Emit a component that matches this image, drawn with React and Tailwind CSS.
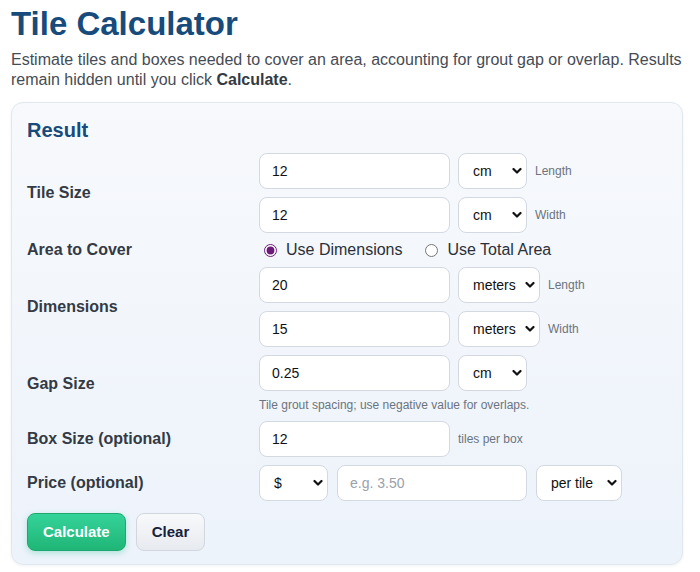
import React, { useState } from 'react';

const font = { fontFamily: '"Liberation Sans", Arial, sans-serif' };

const Chevron = () => (
  <svg
    className="pointer-events-none absolute right-[5px] top-1/2 -translate-y-1/2"
    width="10"
    height="7"
    viewBox="0 0 10 7"
    fill="none"
  >
    <path d="M1.5 1.5 L5 5 L8.5 1.5" stroke="#111" strokeWidth="2.2" strokeLinecap="round" strokeLinejoin="round" />
  </svg>
);

const Select = ({ width, value, options }) => (
  <div className={`relative ${width}`}>
    <select
      defaultValue={value}
      className="h-9 w-full appearance-none rounded-lg border border-[#d3d9e1] bg-white pl-[14px] pr-4 text-sm text-[#111] outline-none"
    >
      {options.map((o) => (
        <option key={o}>{o}</option>
      ))}
    </select>
    <Chevron />
  </div>
);

const TextInput = ({ value, placeholder, width = 'w-[191px]' }) => (
  <input
    type="text"
    defaultValue={value}
    placeholder={placeholder}
    className={`h-9 ${width} rounded-lg border border-[#d3d9e1] bg-white px-3 text-sm text-[#111] placeholder:text-[#9aa1ab] outline-none`}
  />
);

const Note = ({ children }) => <span className="text-xs text-[#6b7480]">{children}</span>;

const Label = ({ children }) => (
  <div className="text-base font-bold leading-[18px] text-[#333a44]">{children}</div>
);

const lengthUnits = ['cm', 'mm', 'inches', 'feet'];
const areaUnits = ['meters', 'feet', 'yards'];

export default function App() {
  const [mode, setMode] = useState('dims');

  return (
    <div className="min-h-screen bg-white pl-[11px] pr-[17px] pt-[5px]" style={font}>
      <h1 className="text-[33px] font-bold leading-[38px] text-[#174b7b]">Tile Calculator</h1>
      <p className="mt-[7px] text-base leading-5 text-[#464c55]">
        Estimate tiles and boxes needed to cover an area, accounting for grout gap or overlap. Results
        remain hidden until you click <b className="text-[#333a44]">Calculate</b>.
      </p>

      <div className="mt-3 rounded-xl border border-[#e0e7ef] bg-gradient-to-b from-[#f7f9fc] to-[#edf3fb] px-[15px] pb-[13px] pt-[15px] shadow-[0_1px_3px_rgba(20,40,80,0.06)]">
        <h2 className="text-xl font-bold leading-6 text-[#174b7b]">Result</h2>

        <div className="mt-[11px] grid grid-cols-[232px_1fr] items-center gap-y-2">
          <Label>Tile Size</Label>
          <div className="flex flex-col gap-2">
            <div className="flex items-center gap-2">
              <TextInput value="12" />
              <Select width="w-[69px]" value="cm" options={lengthUnits} />
              <Note>Length</Note>
            </div>
            <div className="flex items-center gap-2">
              <TextInput value="12" />
              <Select width="w-[69px]" value="cm" options={lengthUnits} />
              <Note>Width</Note>
            </div>
          </div>

          <Label>Area to Cover</Label>
          <div className="flex h-[18px] items-center text-base leading-[18px] text-[#2b3038]">
            <label className="flex items-center">
              <input
                type="radio"
                name="area"
                checked={mode === 'dims'}
                onChange={() => setMode('dims')}
                className="ml-[5px] mr-[9px] h-[13px] w-[13px] accent-[#6d1b7b]"
              />
              Use Dimensions
            </label>
            <label className="ml-[23px] flex items-center">
              <input
                type="radio"
                name="area"
                checked={mode === 'total'}
                onChange={() => setMode('total')}
                className="mr-[9px] h-[13px] w-[13px] accent-[#6d1b7b]"
              />
              Use Total Area
            </label>
          </div>

          <Label>Dimensions</Label>
          <div className="flex flex-col gap-2">
            <div className="flex items-center gap-2">
              <TextInput value="20" />
              <Select width="w-[82px]" value="meters" options={areaUnits} />
              <Note>Length</Note>
            </div>
            <div className="flex items-center gap-2">
              <TextInput value="15" />
              <Select width="w-[82px]" value="meters" options={areaUnits} />
              <Note>Width</Note>
            </div>
          </div>

          <Label>Gap Size</Label>
          <div className="flex flex-col">
            <div className="flex items-center gap-2">
              <TextInput value="0.25" />
              <Select width="w-[69px]" value="cm" options={['cm', 'mm', 'inches']} />
            </div>
            <div className="mt-[6px] text-xs leading-4 text-[#6b7480]">
              Tile grout spacing; use negative value for overlaps.
            </div>
          </div>

          <Label>Box Size (optional)</Label>
          <div className="flex items-center gap-2">
            <TextInput value="12" />
            <Note>tiles per box</Note>
          </div>

          <Label>Price (optional)</Label>
          <div className="flex items-center gap-[9px]">
            <Select width="w-[69px]" value="$" options={['$', '€', '£']} />
            <TextInput placeholder="e.g. 3.50" width="w-[190px]" />
            <Select width="w-[86px]" value="per tile" options={['per tile', 'per box', 'per m²']} />
          </div>
        </div>

        <div className="mt-3 flex gap-[10px]">
          <button className="h-[38px] rounded-lg border border-[#1fa86d] bg-gradient-to-b from-[#34d399] to-[#1fb677] px-[15px] text-[15px] font-bold text-white shadow-[0_2px_6px_rgba(16,185,129,0.3)]">
            Calculate
          </button>
          <button className="h-[38px] rounded-lg border border-[#d2d7df] bg-gradient-to-b from-[#f8f9fb] to-[#e7eaef] px-[15px] text-[15px] font-bold text-[#18203a]">
            Clear
          </button>
        </div>
      </div>
    </div>
  );
}
